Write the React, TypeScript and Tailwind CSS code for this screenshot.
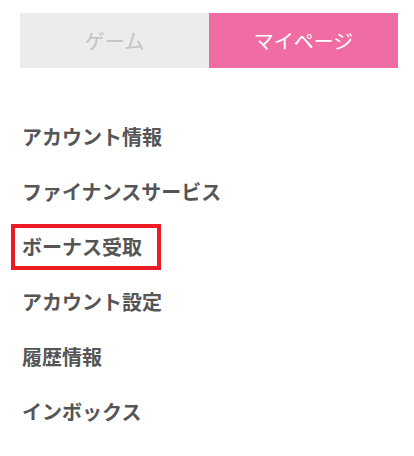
import React from 'react';

const items = [
  'アカウント情報',
  'ファイナンスサービス',
  'ボーナス受取',
  'アカウント設定',
  '履歴情報',
  'インボックス',
];

export default function App() {
  return (
    <div
      className="h-[456px] w-[414px] bg-white"
      style={{ fontFamily: '"Noto Sans CJK JP", "Noto Sans", sans-serif' }}
    >
      <div className="pl-5 pr-4 pt-[13px]">
        <div className="flex h-[55px]">
          <button className="flex flex-1 items-center justify-center bg-[#ececec] text-[20px] text-[#c2c2c2]">
            ゲーム
          </button>
          <button className="flex flex-1 items-center justify-center bg-[#f06ca4] text-[20px] text-white">
            マイページ
          </button>
        </div>
      </div>

      <ul className="mt-[41px] flex flex-col">
        {items.map((label, i) => (
          <li key={label} className="flex h-[55px] items-center pl-[11px]">
            <span
              className={
                i === 2
                  ? 'flex h-[46px] w-[150px] items-center border-4 border-[#ed1c24] pl-[7px] text-[20px] font-bold text-[#555555]'
                  : 'flex items-center pl-[11px] text-[20px] font-bold text-[#555555]'
              }
            >
              {label}
            </span>
          </li>
        ))}
      </ul>
    </div>
  );
}
